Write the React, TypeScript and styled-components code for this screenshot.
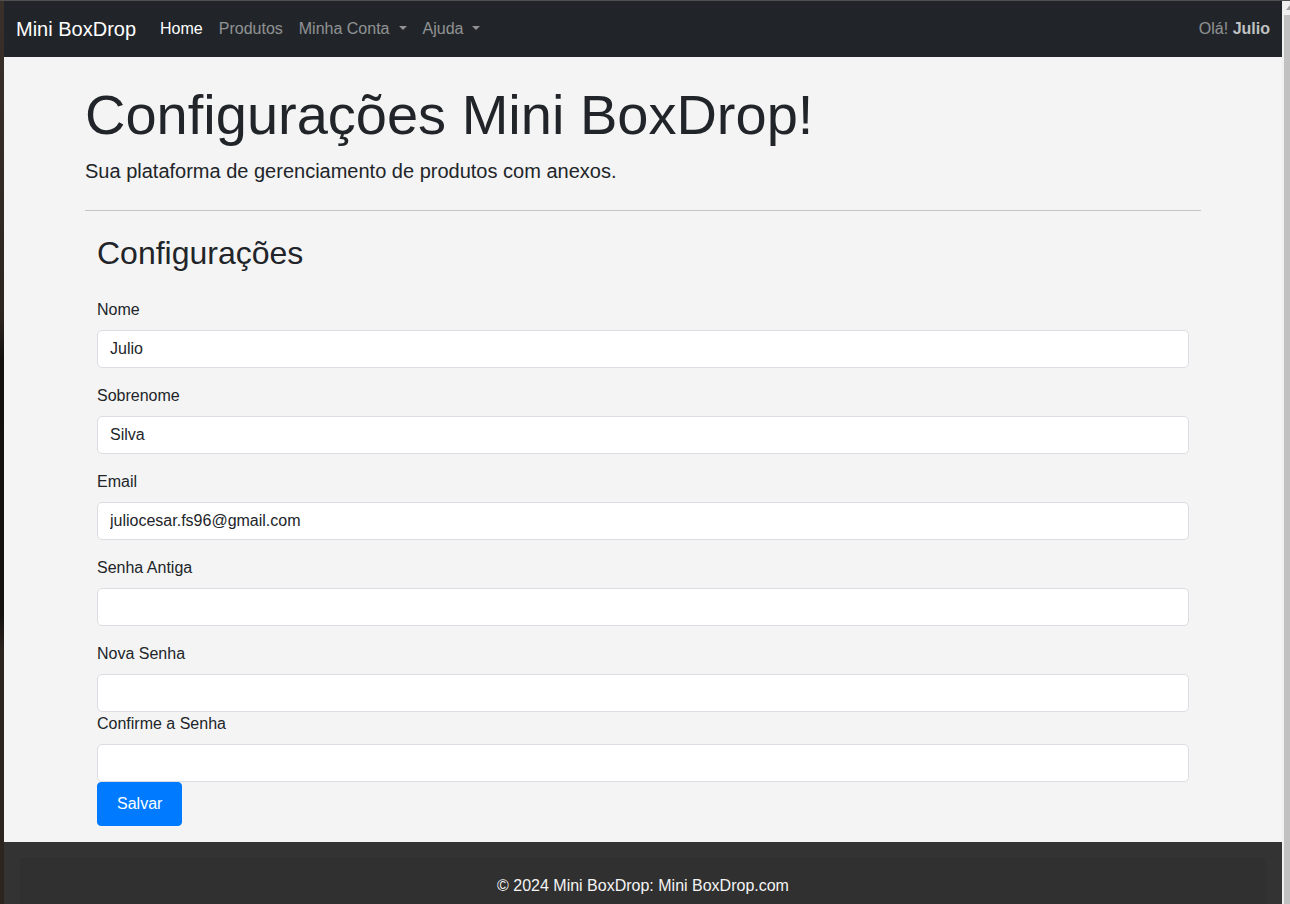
import React from "react";
import styled, { createGlobalStyle } from "styled-components";

const GlobalStyle = createGlobalStyle`
  html, body { margin: 0; padding: 0; }
  body {
    background: #2e2924;
    font-family: "Liberation Sans", Arial, sans-serif;
    font-size: 16px;
    line-height: 1.5;
    color: #212529;
    overflow: hidden;
  }
  * { box-sizing: border-box; }
`;

const Window = styled.div`
  display: flex;
  height: 904px;
  border-top: 1px solid #505050;
  padding-left: 4px;
  background: linear-gradient(180deg, #3a302a 0%, #2c241f 35%, #121110 40%, #141210 68%, #2c241f 72%, #2b241f 100%);
  overflow: hidden;
`;

const Page = styled.div`
  flex: 1;
  display: flex;
  flex-direction: column;
  background: #f4f4f4;
  min-width: 0;
  & > * { flex-shrink: 0; }
`;

const ScrollTrack = styled.div`
  width: 8px;
  background: #f0f0f0;
  display: flex;
  flex-direction: column;
  align-items: flex-end;
`;

const ScrollArrow = styled.div`
  width: 0;
  height: 0;
  margin: 4px 0 4px 0;
  border-left: 4px solid transparent;
  border-bottom: 5px solid #a3a3a3;
`;

const ScrollThumb = styled.div`
  flex: 1;
  width: 6px;
  margin-top: 1px;
  background: #c1c1c1;
`;

const Navbar = styled.nav`
  height: 56px;
  background: #212529;
  display: flex;
  align-items: center;
  padding: 0 12px;
`;

const Brand = styled.a`
  font-size: 20px;
  color: #fff;
  margin-right: 16px;
  line-height: 30px;
  text-decoration: none;
`;

const NavList = styled.div`
  display: flex;
  flex: 1;
`;

const NavLink = styled.a<{ $active?: boolean; $dropdown?: boolean }>`
  padding: 8px;
  color: ${(p) => (p.$active ? "#fff" : "rgba(255,255,255,0.5)")};
  text-decoration: none;
  font-size: 16px;
  ${(p) =>
    p.$dropdown
      ? `&::after {
    content: "";
    display: inline-block;
    margin-left: 9px;
    vertical-align: 0.255em;
    border-top: 0.3em solid;
    border-right: 0.3em solid transparent;
    border-left: 0.3em solid transparent;
  }`
      : ""}
`;

const Greeting = styled.span`
  color: rgba(255, 255, 255, 0.5);
  font-size: 16px;
  b {
    color: rgba(255, 255, 255, 0.72);
  }
`;

const Main = styled.main`
  flex: 1;
  display: flex;
  flex-direction: column;
  padding: 0 81px;
`;

const Hero = styled.header`
  padding-top: 24px;
`;

const Title = styled.h1`
  margin: 0 0 8px;
  font-size: 56px;
  font-weight: 300;
  line-height: 1.2;
  color: #212529;
`;

const Lead = styled.p`
  margin: 0;
  font-size: 20px;
  font-weight: 300;
  line-height: 1.5;
`;

const Rule = styled.hr`
  margin: 24px 0 0;
  border: 0;
  border-top: 1px solid #c4c4c4;
`;

const FormSection = styled.section`
  padding: 23px 12px 16px;
`;

const SectionTitle = styled.h2`
  margin: 0 0 25px;
  font-size: 32px;
  font-weight: 500;
  line-height: 1.2;
`;

const Group = styled.div<{ $tight?: boolean }>`
  margin-bottom: ${(p) => (p.$tight ? "0" : "16px")};
`;

const Label = styled.label`
  display: block;
  margin-bottom: 8px;
  font-size: 16px;
  line-height: 24px;
`;

const Input = styled.input`
  display: block;
  width: 100%;
  height: 38px;
  padding: 6px 12px;
  font-family: inherit;
  font-size: 16px;
  line-height: 24px;
  color: #212529;
  background: #fff;
  border: 1px solid #dcdde2;
  border-radius: 5px;
  outline: none;
`;

const Button = styled.button`
  align-self: flex-start;
  height: 44px;
  padding: 0 19px;
  font-family: inherit;
  font-size: 16px;
  color: #fff;
  background: #007bff;
  border: 1px solid #007bff;
  border-radius: 4px;
`;

const Form = styled.form`
  display: flex;
  flex-direction: column;
`;

const Footer = styled.footer`
  background: #333;
  padding: 16px 16px 0;
`;

const FooterInner = styled.div`
  background: #303030;
  color: #f4f4f4;
  text-align: center;
  font-size: 16px;
  line-height: 24px;
  padding: 16px 0 20px;
`;

const fields: { label: string; value: string; tight?: boolean }[] = [
  { label: "Nome", value: "Julio" },
  { label: "Sobrenome", value: "Silva" },
  { label: "Email", value: "juliocesar.fs96@gmail.com" },
  { label: "Senha Antiga", value: "" },
  { label: "Nova Senha", value: "", tight: true },
  { label: "Confirme a Senha", value: "", tight: true },
];

export default function App() {
  return (
    <>
      <GlobalStyle />
      <Window>
        <Page>
          <Navbar>
            <Brand href="#">Mini BoxDrop</Brand>
            <NavList>
              <NavLink $active href="#">Home</NavLink>
              <NavLink href="#">Produtos</NavLink>
              <NavLink $dropdown href="#">Minha Conta</NavLink>
              <NavLink $dropdown href="#">Ajuda</NavLink>
            </NavList>
            <Greeting>
              Olá! <b>Julio</b>
            </Greeting>
          </Navbar>
          <Main>
            <Hero>
              <Title>Configurações Mini BoxDrop!</Title>
              <Lead>Sua plataforma de gerenciamento de produtos com anexos.</Lead>
              <Rule />
            </Hero>
            <FormSection>
              <SectionTitle>Configurações</SectionTitle>
              <Form onSubmit={(e) => e.preventDefault()}>
                {fields.map((f) => (
                  <Group key={f.label} $tight={f.tight}>
                    <Label>{f.label}</Label>
                    <Input
                      type={f.label.includes("Senha") ? "password" : "text"}
                      defaultValue={f.value}
                    />
                  </Group>
                ))}
                <Button type="submit">Salvar</Button>
              </Form>
            </FormSection>
          </Main>
          <Footer>
            <FooterInner>© 2024 Mini BoxDrop: Mini BoxDrop.com</FooterInner>
          </Footer>
        </Page>
        <ScrollTrack>
          <ScrollArrow />
          <ScrollThumb />
        </ScrollTrack>
      </Window>
    </>
  );
}
